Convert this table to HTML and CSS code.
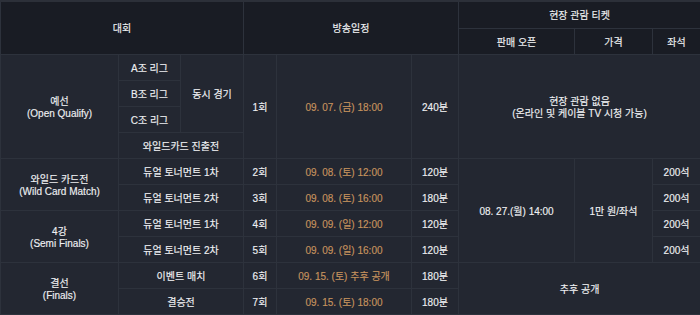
FILE: index.html
```html
<!DOCTYPE html>
<html lang="ko">
<head>
<meta charset="utf-8">
<link rel="stylesheet" href="styles.css">
</head>
<body>
<table class="sched">
  <colgroup>
    <col class="c1"><col class="c2"><col class="c3"><col class="c4"><col class="c5"><col class="c6"><col class="c7"><col class="c8"><col class="c9">
  </colgroup>
  <thead>
    <tr class="h1">
      <th colspan="3" rowspan="2">대회</th>
      <th colspan="3" rowspan="2">방송일정</th>
      <th colspan="3">현장 관람 티켓</th>
    </tr>
    <tr class="h2">
      <th>판매 오픈</th>
      <th>가격</th>
      <th>좌석</th>
    </tr>
  </thead>
  <tbody>
    <tr>
      <td rowspan="4">예선<br>(Open Qualify)</td>
      <td>A조 리그</td>
      <td rowspan="3">동시 경기</td>
      <td rowspan="4">1회</td>
      <td rowspan="4" class="date">09. 07. (금) 18:00</td>
      <td rowspan="4">240분</td>
      <td colspan="3" rowspan="4">현장 관람 없음<br>(온라인 및 케이블 TV 시청 가능)</td>
    </tr>
    <tr><td>B조 리그</td></tr>
    <tr><td>C조 리그</td></tr>
    <tr><td colspan="2">와일드카드 진출전</td></tr>
    <tr>
      <td rowspan="2">와일드 카드전<br>(Wild Card Match)</td>
      <td colspan="2">듀얼 토너먼트 1차</td>
      <td>2회</td>
      <td class="date">09. 08. (토) 12:00</td>
      <td>120분</td>
      <td rowspan="4">08. 27.(월) 14:00</td>
      <td rowspan="4">1만 원/좌석</td>
      <td>200석</td>
    </tr>
    <tr>
      <td colspan="2">듀얼 토너먼트 2차</td>
      <td>3회</td>
      <td class="date">09. 08. (토) 16:00</td>
      <td>180분</td>
      <td>200석</td>
    </tr>
    <tr>
      <td rowspan="2">4강<br>(Semi Finals)</td>
      <td colspan="2">듀얼 토너먼트 1차</td>
      <td>4회</td>
      <td class="date">09. 09. (일) 12:00</td>
      <td>120분</td>
      <td>200석</td>
    </tr>
    <tr>
      <td colspan="2">듀얼 토너먼트 2차</td>
      <td>5회</td>
      <td class="date">09. 09. (일) 16:00</td>
      <td>120분</td>
      <td>200석</td>
    </tr>
    <tr>
      <td rowspan="2">결선<br>(Finals)</td>
      <td colspan="2">이벤트 매치</td>
      <td>6회</td>
      <td class="date">09. 15. (토) 추후 공개</td>
      <td>180분</td>
      <td colspan="3" rowspan="2">추후 공개</td>
    </tr>
    <tr>
      <td colspan="2">결승전</td>
      <td>7회</td>
      <td class="date">09. 15. (토) 18:00</td>
      <td>180분</td>
    </tr>
  </tbody>
</table>
</body>
</html>
```

FILE: styles.css
```css
html, body {
  margin: 0;
  padding: 0;
  background: #232731;
}

.sched {
  width: 700px;
  table-layout: fixed;
  border-collapse: collapse;
  font-family: "Liberation Sans", "Noto Sans CJK KR", sans-serif;
  font-size: 10px;
  line-height: 12px;
  color: #eeeff1;
  -webkit-text-stroke: 0.15px #eeeff1;
  border-top: 2px solid #2c3039;
}

.c1 { width: 118px; }
.c2 { width: 62px; }
.c3 { width: 63px; }
.c4 { width: 33px; }
.c5 { width: 135px; }
.c6 { width: 47px; }
.c7 { width: 116px; }
.c8 { width: 78px; }
.c9 { width: 48px; }

.sched th,
.sched td {
  border: 1px solid #2d323c;
  padding: 3px 0 0;
  text-align: center;
  vertical-align: middle;
  font-weight: normal;
}

.sched th {
  background: #191c24;
}

.sched td {
  background: #232731;
}

.sched thead tr.h1 { height: 27px; }
.sched thead tr.h2 { height: 26px; }
.sched tbody tr { height: 26px; }

.sched td.date {
  color: #c6935e;
  -webkit-text-stroke: 0.15px #c6935e;
}
```
